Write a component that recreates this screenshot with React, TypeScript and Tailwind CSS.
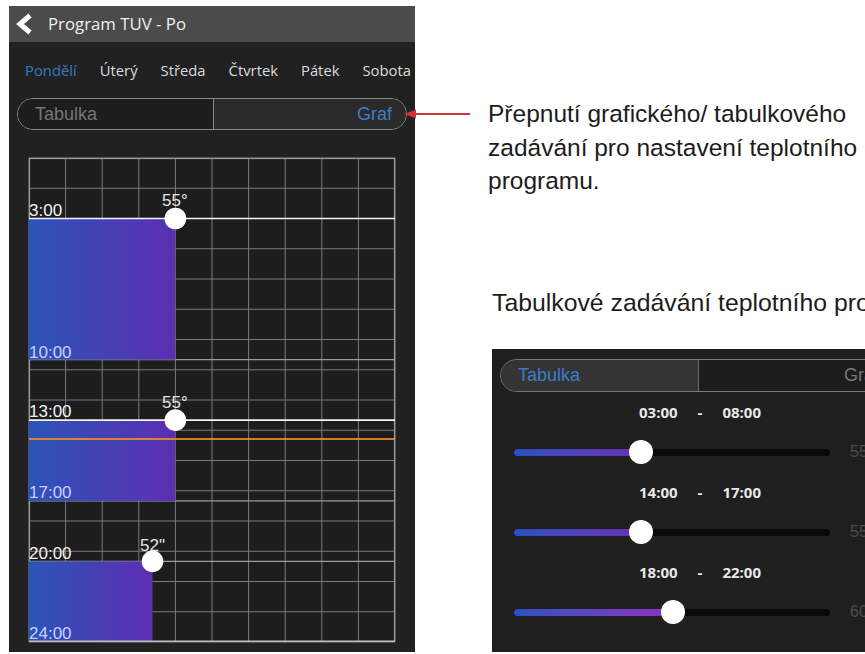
import React from "react";

const W = 366;
const H = 484;
const hy = (h: number) => (h * H) / 24;

function Chart() {
  const cols = Array.from({ length: 11 }, (_, k) => (k * W) / 10);
  const rows = Array.from({ length: 17 }, (_, k) => (k * H) / 16);
  const blocks = [
    { from: 3, to: 10, x: 146.4, val: "55°", lx: 133, ly: 48 },
    { from: 13, to: 17, x: 146.4, val: "55°", lx: 133, ly: 250 },
    { from: 20, to: 24, x: 123.5, val: '52"', lx: 111, ly: 393 },
  ];
  const labels = [
    { t: "3:00", y: 58, c: "#f2f2f2" },
    { t: "10:00", y: 199.5, c: "#c9d0ff" },
    { t: "13:00", y: 258.5, c: "#f2f2f2" },
    { t: "17:00", y: 339.5, c: "#c9d0ff" },
    { t: "20:00", y: 401, c: "#f2f2f2" },
    { t: "24:00", y: 481, c: "#c9d0ff" },
  ];
  return (
    <svg width={W} height={H} viewBox={`0 0 ${W} ${H}`} className="block overflow-visible">
      <defs>
        <linearGradient id="blk" x1="0" y1="0" x2="1" y2="0">
          <stop offset="0" stopColor="#2c54b8" />
          <stop offset="1" stopColor="#5c2eb2" />
        </linearGradient>
      </defs>
      <rect x={0} y={0} width={W} height={H} fill="#1d1d1d" />
      {cols.map((x, i) => (
        <line key={"c" + i} x1={x} y1={0} x2={x} y2={H} stroke="#7a7a7a" strokeWidth={1} />
      ))}
      {rows.map((y, i) => (
        <line key={"r" + i} x1={0} y1={y} x2={W} y2={y} stroke="#7a7a7a" strokeWidth={1} />
      ))}
      {[10, 17, 20].map((h) => (
        <line key={"h" + h} x1={0} y1={hy(h)} x2={W} y2={hy(h)} stroke="#9a9a9a" strokeWidth={1.2} />
      ))}
      <rect x={0.5} y={0.5} width={W - 1} height={H - 1} fill="none" stroke="#9c9c9c" strokeWidth={1.2} />
      {blocks.map((b, i) => (
        <rect key={"b" + i} x={0} y={hy(b.from)} width={b.x} height={hy(b.to) - hy(b.from)} fill="url(#blk)" />
      ))}
      {[3, 13].map((h) => (
        <line key={"w" + h} x1={0} y1={hy(h)} x2={W} y2={hy(h)} stroke="#f4f4f4" strokeWidth={1.6} />
      ))}
      <line x1={0} y1={H - 0.8} x2={W} y2={H - 0.8} stroke="#bdbdbd" strokeWidth={1.6} />
      <line x1={0} y1={281} x2={W} y2={281} stroke="#f0901e" strokeOpacity={0.85} strokeWidth={2} />
      {labels.map((l) => (
        <text key={l.t} x={0} y={l.y} fill={l.c} fontSize={17} fontFamily="'Liberation Sans', Arial, sans-serif">
          {l.t}
        </text>
      ))}
      {blocks.map((b, i) => (
        <g key={"d" + i}>
          <text x={b.lx} y={b.ly} fill="#e4e4e4" fontSize={17} fontFamily="'Liberation Sans', Arial, sans-serif">
            {b.val}
          </text>
          <circle cx={b.x} cy={hy(b.from)} r={10.8} fill="#ffffff" />
        </g>
      ))}
    </svg>
  );
}

function Slider({ thumb, val, strong }: { thumb: number; val: string; strong?: boolean }) {
  return (
    <div className="flex items-center h-[24px]">
      <div className="relative ml-[22px] w-[316px] h-[7px] rounded-full bg-[#0a0a0a]">
        <div
          className={
            strong
              ? "absolute left-0 top-0 h-[7px] rounded-full bg-linear-to-r from-[#2a4fc2] to-[#8a2fc4]"
              : "absolute left-0 top-0 h-[7px] rounded-full bg-linear-to-r from-[#2a4fc2] to-[#6630b8]"
          }
          style={{ width: thumb - 22 }}
        />
        <div
          className="absolute top-[-8.5px] h-[24px] w-[24px] rounded-full bg-white"
          style={{ left: thumb - 22 - 12 }}
        />
      </div>
      <span className="ml-[20px] text-[16px] text-[#4d4d4d] font-['Liberation_Sans',Arial,sans-serif]">{val}</span>
    </div>
  );
}

function TimeRow({ a, b }: { a: string; b: string }) {
  return (
    <div className="flex items-center h-[20px] pl-[147px] gap-[20px] text-[15px] font-bold text-[#e8e8e8] font-['Open_Sans',sans-serif]">
      <span>{a}</span>
      <span>-</span>
      <span>{b}</span>
    </div>
  );
}

export default function App() {
  const days = ["Pondělí", "Úterý", "Středa", "Čtvrtek", "Pátek", "Sobota"];
  return (
    <div className="w-[865px] h-[654px] bg-white overflow-hidden flex">
      {/* Left phone screen */}
      <div className="mt-[6px] ml-[9px] w-[406px] h-[646px] shrink-0 bg-[#212121] flex flex-col overflow-hidden">
        <div className="h-[36px] bg-[#4b4b4b] flex items-center pl-[6px]">
          <svg width="18" height="22" viewBox="0 0 18 22" className="block">
            <polyline points="15,2.5 5,11 15,19.5" fill="none" stroke="#ffffff" strokeWidth="5" />
          </svg>
          <span className="ml-[15px] text-[16.8px] text-[#f0f0f0] font-['Open_Sans',sans-serif]">Program TUV - Po</span>
        </div>
        <div className="h-[56px] flex items-center pl-[16px] gap-[23px] whitespace-nowrap text-[14.8px] text-[#dcdcdc] font-['Open_Sans',sans-serif]">
          {days.map((d, i) => (
            <span key={d} className={i === 0 ? "text-[#3b78c4]" : ""}>
              {d}
            </span>
          ))}
        </div>
        <div className="mx-[8px] h-[32px] rounded-full border-[1.5px] border-[#8a8a8a] flex overflow-hidden font-['Liberation_Sans',Arial,sans-serif] text-[18px]">
          <div className="flex-1 bg-[#1d1d1d] border-r-[1.5px] border-[#8a8a8a] flex items-center pl-[17px] text-[#767676]">
            Tabulka
          </div>
          <div className="flex-1 bg-[#2b2b2b] flex items-center justify-end pr-[14px] text-[#3d7cc9]">Graf</div>
        </div>
        <div className="mt-[28px] mx-[20px]">
          <Chart />
        </div>
      </div>

      {/* Right annotations */}
      <div className="flex flex-col w-[450px] shrink-0">
        <div className="mt-[97px] flex items-start">
          <svg width="68" height="34" viewBox="0 0 68 34" className="block -ml-[11px] shrink-0">
            <line x1="8" y1="17" x2="66" y2="17" stroke="#d2303c" strokeWidth="2" />
            <polygon points="0,17 12,12.5 12,21.5" fill="#d2303c" />
          </svg>
          <div className="ml-[16px] text-[24.5px] leading-[33.5px] text-[#1c1c1c] whitespace-nowrap font-['Liberation_Sans',Arial,sans-serif]">
            <div>Přepnutí grafického/ tabulkového</div>
            <div>zadávání pro nastavení teplotního</div>
            <div>programu.</div>
          </div>
        </div>
        <div className="mt-[88px] ml-[77px] text-[24.8px] leading-[33.5px] text-[#1c1c1c] whitespace-nowrap font-['Liberation_Sans',Arial,sans-serif]">
          Tabulkové zadávání teplotního programu.
        </div>
        <div className="mt-[30px] ml-[77px] w-[420px] h-[303px] shrink-0 bg-[#1f1f1f] flex flex-col">
          <div className="mt-[10px] ml-[8px] w-[396px] h-[33px] rounded-full border-[1.5px] border-[#7a7a7a] flex overflow-hidden font-['Liberation_Sans',Arial,sans-serif] text-[18px]">
            <div className="flex-1 bg-[#343434] border-r-[1.5px] border-[#6a6a6a] flex items-center pl-[17px] text-[#3d7cc9]">
              Tabulka
            </div>
            <div className="flex-1 bg-[#1c1c1c] flex items-center justify-end pr-[16px] text-[#777777]">Graf</div>
          </div>
          <div className="mt-[10px]">
            <TimeRow a="03:00" b="08:00" />
          </div>
          <div className="mt-[18px]">
            <Slider thumb={149} val="55" />
          </div>
          <div className="mt-[18px]">
            <TimeRow a="14:00" b="17:00" />
          </div>
          <div className="mt-[18px]">
            <Slider thumb={149} val="55" />
          </div>
          <div className="mt-[18px]">
            <TimeRow a="18:00" b="22:00" />
          </div>
          <div className="mt-[18px]">
            <Slider thumb={181} val="60" strong />
          </div>
        </div>
      </div>
    </div>
  );
}
